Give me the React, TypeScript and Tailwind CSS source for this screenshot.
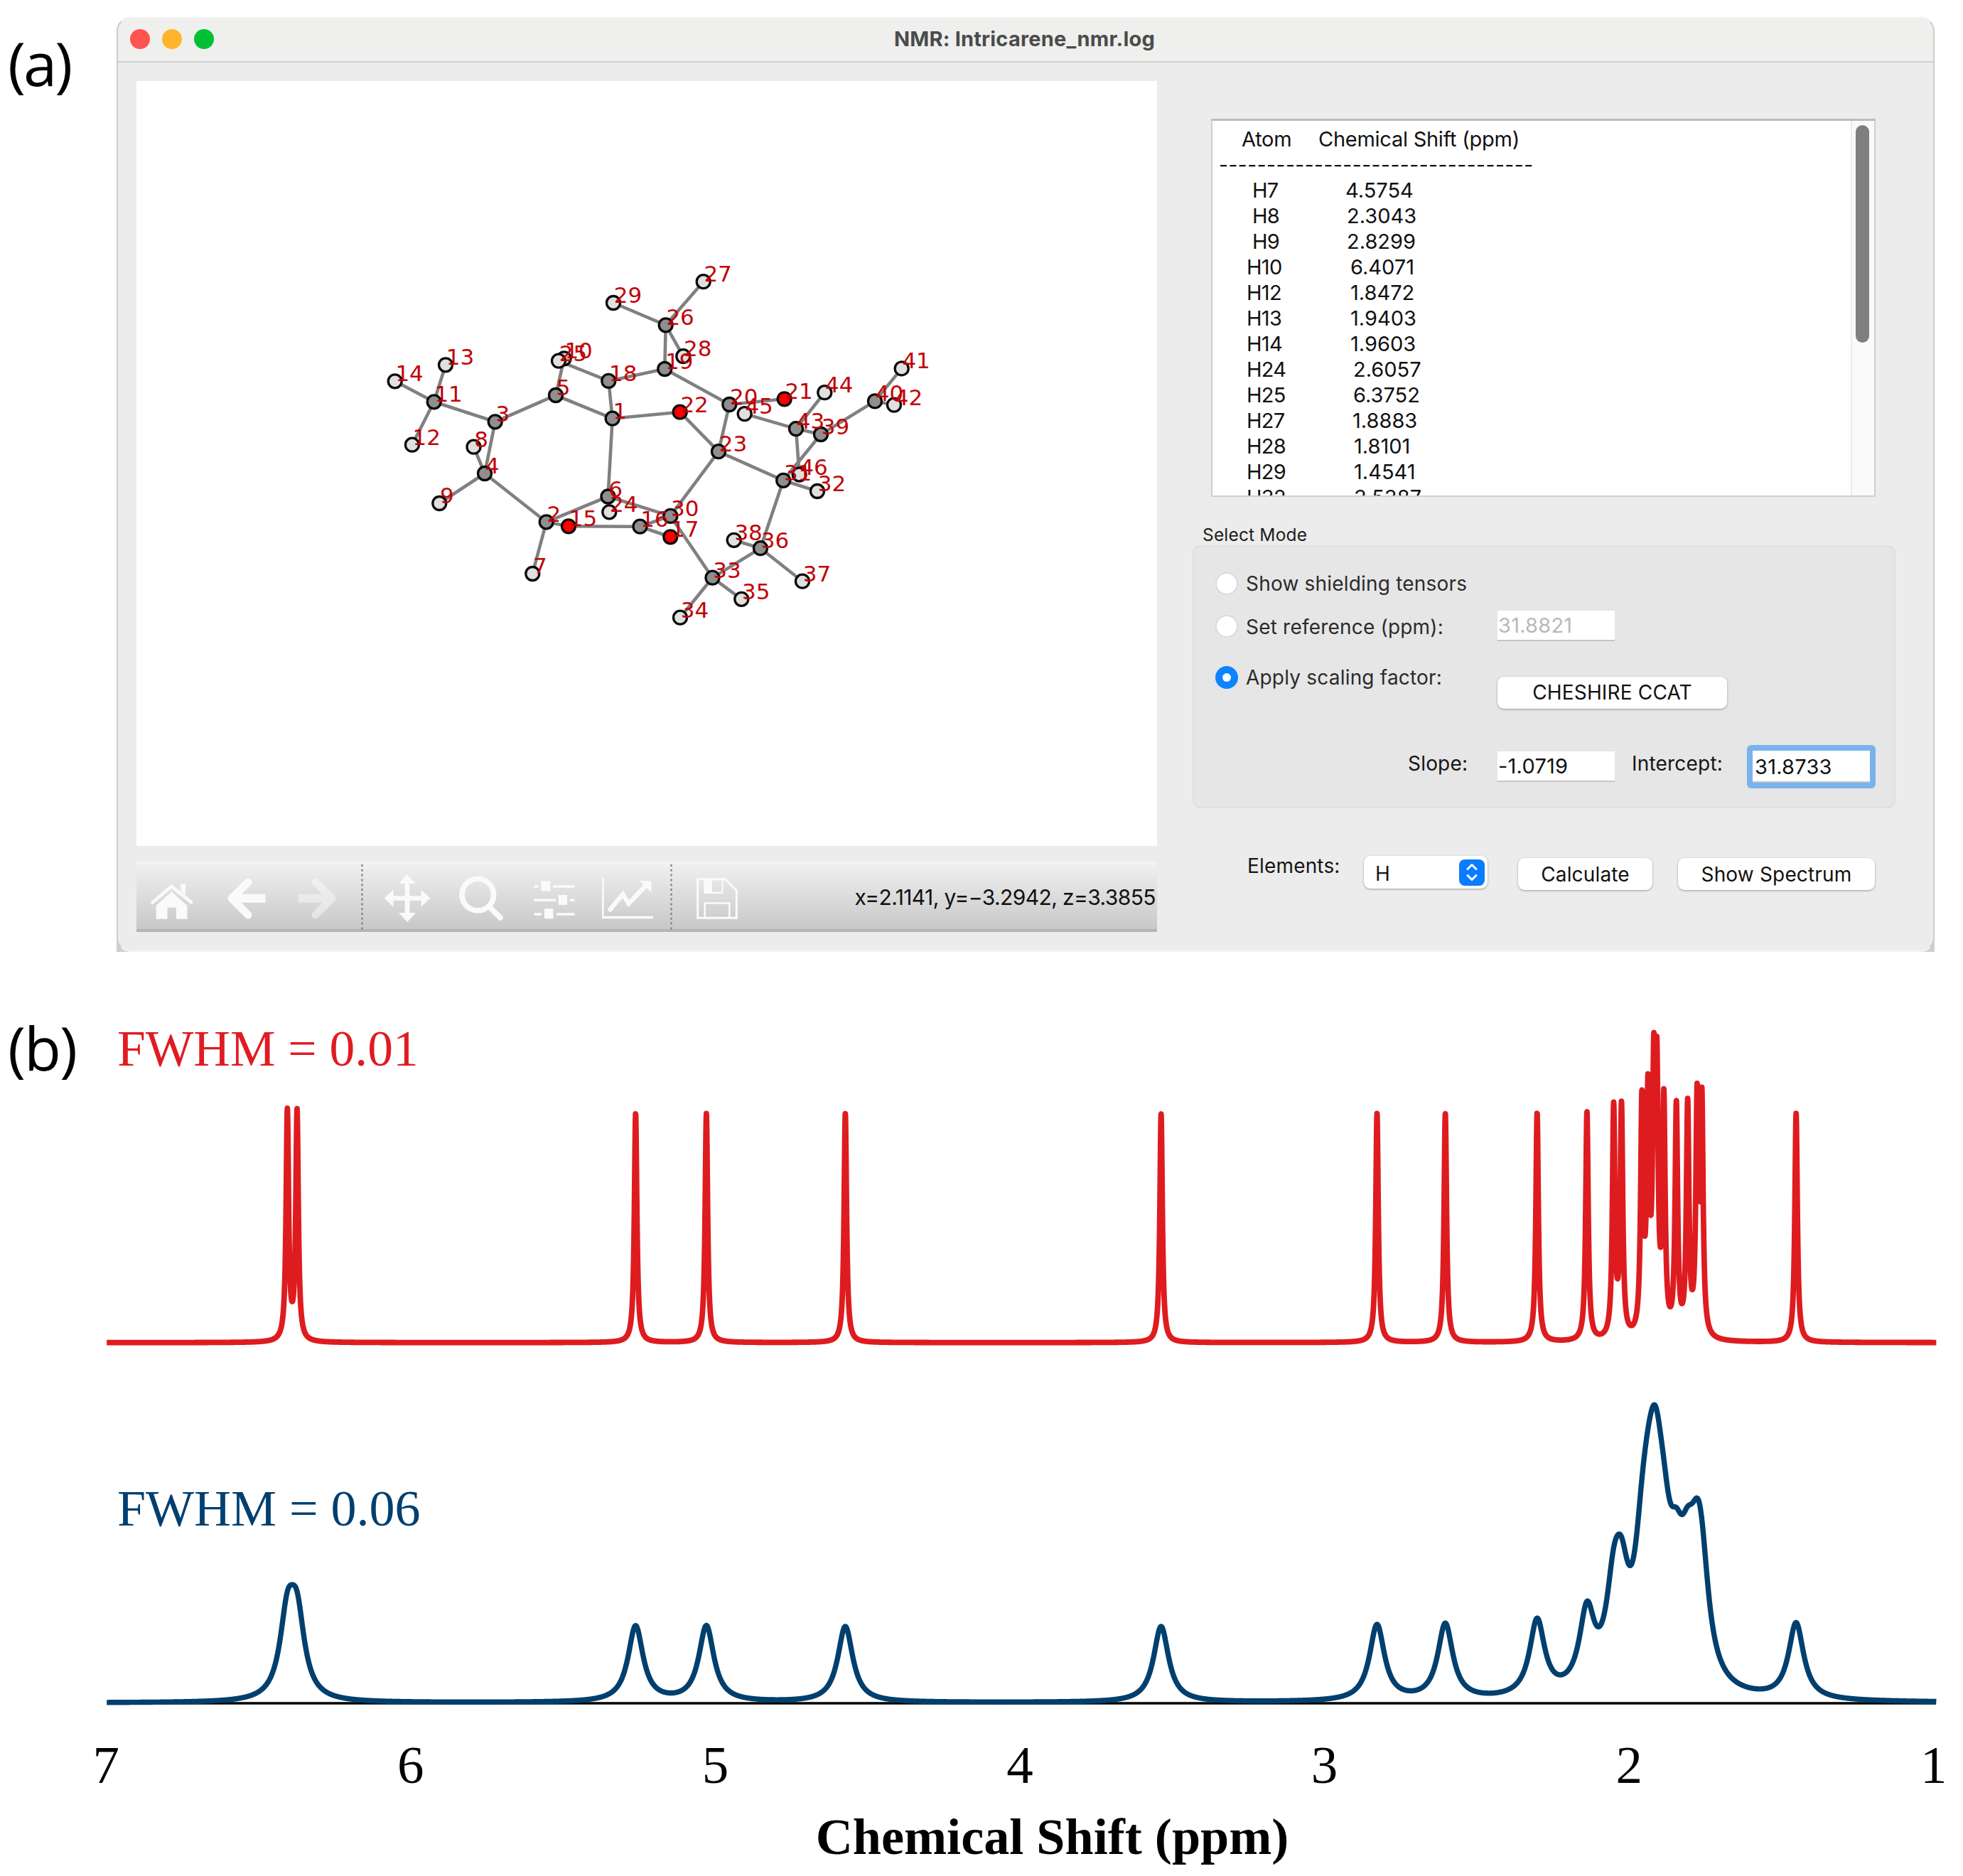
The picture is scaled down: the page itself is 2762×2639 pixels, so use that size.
import type { ReactNode } from 'react';
import clsx from 'clsx';

type Element = 'H' | 'C' | 'O';

interface Atom {
  id: number;
  el: Element;
  x: number;
  y: number;
}

const ATOMS: Atom[] = [
  { id: 14, el: 'H', x: 555.7, y: 536.3 },
  { id: 13, el: 'H', x: 627, y: 513.3 },
  { id: 11, el: 'C', x: 610.7, y: 565.3 },
  { id: 12, el: 'H', x: 579.9, y: 625.7 },
  { id: 3, el: 'C', x: 696.7, y: 593.3 },
  { id: 8, el: 'H', x: 666.5, y: 628.7 },
  { id: 4, el: 'C', x: 682, y: 666 },
  { id: 9, el: 'H', x: 618.3, y: 708 },
  { id: 5, el: 'C', x: 782, y: 556 },
  { id: 10, el: 'H', x: 793.7, y: 504.3 },
  { id: 25, el: 'H', x: 786, y: 507.7 },
  { id: 18, el: 'C', x: 856.3, y: 535.9 },
  { id: 29, el: 'H', x: 863, y: 426 },
  { id: 26, el: 'C', x: 936.7, y: 457.3 },
  { id: 27, el: 'H', x: 989.7, y: 396.2 },
  { id: 28, el: 'H', x: 961.3, y: 501.2 },
  { id: 1, el: 'C', x: 861.7, y: 588.7 },
  { id: 19, el: 'C', x: 935.3, y: 519 },
  { id: 24, el: 'H', x: 857.3, y: 720.3 },
  { id: 6, el: 'C', x: 855.5, y: 698.5 },
  { id: 2, el: 'C', x: 768.7, y: 734.3 },
  { id: 15, el: 'O', x: 800, y: 740.3 },
  { id: 16, el: 'C', x: 900.5, y: 740.7 },
  { id: 30, el: 'C', x: 943.4, y: 725.9 },
  { id: 17, el: 'O', x: 943.3, y: 755.3 },
  { id: 7, el: 'H', x: 749.3, y: 807 },
  { id: 20, el: 'C', x: 1026.3, y: 569 },
  { id: 21, el: 'O', x: 1103.7, y: 561.3 },
  { id: 22, el: 'O', x: 956.7, y: 579.7 },
  { id: 23, el: 'C', x: 1011, y: 635.2 },
  { id: 45, el: 'H', x: 1047.7, y: 582.1 },
  { id: 44, el: 'H', x: 1160.3, y: 552.2 },
  { id: 43, el: 'C', x: 1120, y: 603.1 },
  { id: 39, el: 'C', x: 1155, y: 611 },
  { id: 42, el: 'H', x: 1258, y: 569.6 },
  { id: 40, el: 'C', x: 1231, y: 564.4 },
  { id: 41, el: 'H', x: 1268.7, y: 518.4 },
  { id: 46, el: 'H', x: 1124.7, y: 667.5 },
  { id: 31, el: 'C', x: 1102.2, y: 675.8 },
  { id: 32, el: 'H', x: 1150, y: 691 },
  { id: 38, el: 'H', x: 1032.7, y: 759.8 },
  { id: 36, el: 'C', x: 1070, y: 771.2 },
  { id: 37, el: 'H', x: 1129, y: 817.7 },
  { id: 33, el: 'C', x: 1002.5, y: 812.7 },
  { id: 35, el: 'H', x: 1043.3, y: 842.8 },
  { id: 34, el: 'H', x: 957, y: 868.7 },
];

const BONDS: [number, number][] = [
  [14, 11], [13, 11], [12, 11], [11, 3], [3, 5], [3, 4], [4, 8], [4, 9], [4, 2],
  [5, 1], [5, 10], [25, 18], [18, 1], [18, 19], [19, 26], [26, 29], [26, 27],
  [26, 28], [19, 20], [20, 21], [20, 23], [22, 1], [22, 23], [1, 6], [6, 2],
  [6, 24], [6, 30], [2, 15], [15, 16], [16, 17], [16, 30], [2, 7], [30, 23],
  [30, 33], [33, 34], [33, 35], [33, 36], [36, 37], [36, 38], [36, 31], [31, 32],
  [31, 23], [31, 39], [39, 43], [39, 40], [43, 44], [43, 45], [43, 46], [40, 41],
  [40, 42],
];

const FILL: Record<Element, string> = { H: '#e0e0e0', C: '#8f8f8f', O: '#ff0000' };

// indent = x offset of each column inside the list box
const SHIFTS = [
  { atom: 'H7', atomIndent: 57, shift: '4.5754', shiftIndent: 188 },
  { atom: 'H8', atomIndent: 57, shift: '2.3043', shiftIndent: 190 },
  { atom: 'H9', atomIndent: 57, shift: '2.8299', shiftIndent: 190 },
  { atom: 'H10', atomIndent: 49, shift: '6.4071', shiftIndent: 195 },
  { atom: 'H12', atomIndent: 49, shift: '1.8472', shiftIndent: 195 },
  { atom: 'H13', atomIndent: 49, shift: '1.9403', shiftIndent: 195 },
  { atom: 'H14', atomIndent: 49, shift: '1.9603', shiftIndent: 195 },
  { atom: 'H24', atomIndent: 49, shift: '2.6057', shiftIndent: 199 },
  { atom: 'H25', atomIndent: 49, shift: '6.3752', shiftIndent: 199 },
  { atom: 'H27', atomIndent: 49, shift: '1.8883', shiftIndent: 198 },
  { atom: 'H28', atomIndent: 49, shift: '1.8101', shiftIndent: 200 },
  { atom: 'H29', atomIndent: 49, shift: '1.4541', shiftIndent: 200 },
  { atom: 'H32', atomIndent: 49, shift: '3.5387', shiftIndent: 200 },
];

// [ppm, relative intensity]
const PEAKS: [number, number][] = [
  [6.4071, 1], [6.3752, 1], [5.2638, 1], [5.0315, 1], [4.5754, 1], [3.5387, 1],
  [2.8299, 1], [2.6057, 1], [2.3043, 1], [2.1407, 1], [2.053, 1], [2.0273, 1],
  [1.9603, 1], [1.9403, 1], [1.9213, 1.03], [1.9112, 1.03], [1.8883, 1],
  [1.8472, 1], [1.8101, 1], [1.779, 1], [1.7635, 1], [1.4541, 1],
];

const ppmToX = (ppm: number) => 150.2 + (7 - ppm) * 428.6;

function spectrumPath(fwhm: number, height: number, baseline: number) {
  const hw = fwhm / 2;
  const points: string[] = [];
  for (let ppm = 7; ppm >= 0.9937; ppm -= 0.0005) {
    const sum = PEAKS.reduce((acc, [p, w]) => acc + w / (1 + ((ppm - p) / hw) ** 2), 0);
    points.push(`${ppmToX(ppm).toFixed(2)},${(baseline - height * sum).toFixed(2)}`);
  }
  return points.join(' ');
}

function Molecule() {
  const byId = new Map(ATOMS.map((a) => [a.id, a]));
  return (
    <svg width="1436" height="1076" viewBox="192 114 1436 1076" className="block bg-white">
      {BONDS.map(([a, b]) => {
        const p = byId.get(a)!;
        const q = byId.get(b)!;
        return (
          <line key={`${a}-${b}`} x1={p.x} y1={p.y} x2={q.x} y2={q.y} stroke="#808080" strokeWidth="4.6" />
        );
      })}
      {ATOMS.map((a) => (
        <circle key={a.id} cx={a.x} cy={a.y} r="9.5" fill={FILL[a.el]} stroke="#0a0a0a" strokeWidth="3.3" />
      ))}
      {ATOMS.map((a) => (
        <text
          key={a.id}
          x={a.x + 0.7}
          y={a.y}
          fill="#c00408"
          fontSize="31"
          fontFamily="'DejaVu Sans', sans-serif"
        >
          {a.id}
        </text>
      ))}
    </svg>
  );
}

function ToolIcon({ width, className, children }: { width: number; className?: string; children: ReactNode }) {
  return (
    <svg
      width={width}
      height="99"
      viewBox={`0 0 ${width} 99`}
      fill="none"
      stroke="#fafafa"
      className={clsx('block shrink-0', className)}
    >
      {children}
    </svg>
  );
}

function Separator({ className }: { className?: string }) {
  return (
    <ToolIcon width={3} className={className}>
      <line x1="1.5" y1="4" x2="1.5" y2="96" stroke="#858585" strokeWidth="2.4" strokeDasharray="3 3.8" />
    </ToolIcon>
  );
}

function Toolbar() {
  return (
    <div className="mt-[22px] flex h-[99px] w-[1436px] border-t-[3px] border-b-4 border-t-[#f4f4f4] border-b-[#b5b5b5] bg-linear-to-b from-[#f0f0f0] to-[#c8c8c8]">
      <div className="-mt-[3px] flex">
        {/* Home */}
        <ToolIcon width={60} className="ml-5">
          <path d="M2.5 57.5 L29.4 34.8 L57 57" strokeWidth="4.6" strokeLinecap="round" />
          <path d="M42.3 31.3 H49 V47 L42.3 41 Z" fill="#fafafa" stroke="none" />
          <path d="M29.4 42.5 L51.5 62 V80.7 H36 V64.7 H23.5 V80.7 H7.7 V62 Z" fill="#fafafa" stroke="none" />
        </ToolIcon>
        {/* Back */}
        <ToolIcon width={56} className="ml-[46px]">
          <path d="M31 29 L8 51.7 L31 75" strokeWidth="11" strokeLinecap="round" strokeLinejoin="round" />
          <path d="M10 51.7 H55.5" strokeWidth="12" />
        </ToolIcon>
        {/* Forward */}
        <ToolIcon width={56} className="ml-[45px] opacity-50">
          <path d="M25 29 L48 51.7 L25 75" strokeWidth="11" strokeLinecap="round" strokeLinejoin="round" />
          <path d="M1 51.7 H46" strokeWidth="12" />
        </ToolIcon>
        <Separator className="ml-[33px]" />
        {/* Pan */}
        <ToolIcon width={66} className="ml-[29px]">
          <path d="M33 26 V77 M8 51.5 H58" strokeWidth="6.6" />
          <path
            d="M33 18 L45 31 H21 Z M33 85 L45 72 H21 Z M0.5 51.5 L13.5 39.5 V63.5 Z M65.5 51.5 L52.5 39.5 V63.5 Z"
            fill="#fafafa"
            stroke="none"
          />
        </ToolIcon>
        {/* Zoom */}
        <ToolIcon width={62} className="ml-10">
          <circle cx="26.3" cy="46.6" r="22.3" strokeWidth="7.6" />
          <path d="M43 64 L58 79" strokeWidth="7.5" strokeLinecap="round" />
        </ToolIcon>
        {/* Subplots */}
        <ToolIcon width={58} className="ml-[43px]">
          <path
            d="M0.5 35 H6 M27 35 H57.5 M0.5 54.3 H31 M50.7 54.3 H57.5 M0.5 74 H11 M32 74 H57.5"
            strokeWidth="3.6"
          />
          <path d="M10.5 27.5 h13 v14 h-13 Z M34.7 47 h12.3 v14 h-12.3 Z M15 66.3 h12.5 v14 h-12.5 Z" fill="#fafafa" stroke="none" />
        </ToolIcon>
        {/* Axes */}
        <ToolIcon width={72} className="ml-[38px]">
          <path d="M1.4 23 V80" strokeWidth="2.6" />
          <path d="M0 78.5 H72" strokeWidth="3.4" />
          <path d="M11.5 67.3 L29.4 46 L37.5 59 L61 34.5" strokeWidth="6.5" strokeLinecap="round" />
          <path d="M53 27.3 H69.5 V43.5 Z" fill="#fafafa" stroke="none" />
        </ToolIcon>
        <Separator className="ml-6" />
        {/* Save */}
        <ToolIcon width={58} className="ml-[34px]">
          <path d="M1.7 24.7 H40.5 L56.3 40.5 V79.3 H1.7 Z" strokeWidth="3" />
          <path d="M11.5 24.7 V43.8 H36.5 V24.7" strokeWidth="2.4" />
          <path d="M11 25 h11 v18 h-11 Z" fill="#fafafa" stroke="none" />
          <path d="M11.7 79 V58.5 H46.3 V79" strokeWidth="2.6" />
        </ToolIcon>
      </div>
      <span className="mr-0.5 ml-auto text-[30px] leading-[94px] tracking-[-0.02em] whitespace-pre text-[#111]">
        x=2.1141, y=−3.2942, z=3.3855
      </span>
    </div>
  );
}

function ShiftList() {
  return (
    <div className="mt-[79px] ml-[75px] flex h-[532px] w-[935px] overflow-hidden border-2 border-t-[3px] border-[#cfcfcf] border-t-[#bcbcbc] bg-white text-[29px] leading-9 text-[#111]">
      <div className="flex-1 pt-2">
        <div className="flex h-9 tracking-[-0.009em]">
          <span className="ml-[41px] w-[108px]">Atom</span>
          <span className="whitespace-pre">Chemical Shift (ppm)</span>
        </div>
        <div className="ml-[9px] h-9 text-[28px] tracking-[0.019em] whitespace-pre">---------------------------------</div>
        {SHIFTS.map((row) => (
          <div key={row.atom} className="flex h-9">
            <span className="tracking-[-0.025em]" style={{ marginLeft: row.atomIndent - 1, width: row.shiftIndent - row.atomIndent }}>
              {row.atom}
            </span>
            <span>{row.shift}</span>
          </div>
        ))}
      </div>
      <div className="w-[33px] border-l-2 border-[#ebebeb] bg-[#fafafa] pt-[6px] pl-[5px]">
        <div className="h-[306px] w-[19px] rounded-full bg-[#7f7f7f]" />
      </div>
    </div>
  );
}

function Radio({ checked = false }: { checked?: boolean }) {
  return (
    <span
      className={clsx(
        'flex size-8 shrink-0 items-center justify-center rounded-full',
        checked ? 'bg-[#0a84ff]' : 'border-2 border-[#dadada] bg-white',
      )}
    >
      {checked && <span className="size-3 rounded-full bg-white" />}
    </span>
  );
}

function Entry({ value, disabled = false }: { value: string; disabled?: boolean }) {
  return (
    <div
      className={clsx(
        'flex h-[43px] w-[165px] items-center border-b-2 border-[#c6c6c6] bg-white pl-px text-[29px] tracking-[0.008em]',
        disabled ? 'text-[#b9b9b9]' : 'text-[#111]',
      )}
    >
      {value}
    </div>
  );
}

function PushButton({ className, children }: { className?: string; children: ReactNode }) {
  return (
    <button
      className={clsx(
        'flex h-[45px] items-center justify-center rounded-[9px] bg-white leading-none tracking-[0.006em] whitespace-pre text-[#111] shadow-[0_1px_3px_rgba(0,0,0,0.35)]',
        className,
      )}
    >
      {children}
    </button>
  );
}

function ModeGroup() {
  return (
    <div className="ml-[49px] h-[370px] w-[989px] rounded-[11px] border-2 border-[#dfdfdf] bg-[#e6e6e6] pl-[30px] text-[28px] leading-none tracking-[0.007em] text-[#2b2b2b]">
      <div className="mt-[22px] flex h-[60px] items-center gap-[11px]">
        <Radio />
        <span>Show shielding tensors</span>
      </div>
      <div className="flex h-[59px] items-center">
        <Radio />
        <span className="mt-0.5 ml-[11px] w-[354px]">Set reference (ppm):</span>
        <Entry value="31.8821" disabled />
      </div>
      <div className="flex h-[90px]">
        <div className="flex h-[86px] items-center gap-[11px]">
          <Radio checked />
          <span className="w-[354px]">Apply scaling factor:</span>
        </div>
        <PushButton className="mt-[42px] w-[323px] pb-px">CHESHIRE CCAT</PushButton>
      </div>
      <div className="mt-[48px] flex h-[61px] items-center text-[#151515]">
        <span className="mb-2.5 ml-[271px] w-[126px]">Slope:</span>
        <Entry value="-1.0719" />
        <span className="mb-2.5 ml-6 w-[162px]">Intercept:</span>
        <div className="rounded-[6px] border-8 border-[#7ab2ee]">
          <div className="flex h-[45px] w-[165px] items-center border-b-2 border-[#c6c6c6] bg-white pt-0.5 pl-[3px] text-[29px] tracking-[0.008em] text-[#111]">
            31.8733
          </div>
        </div>
      </div>
    </div>
  );
}

function Actions() {
  return (
    <div className="mt-[67px] ml-[126px] flex items-start text-[28px] tracking-[0.006em] text-[#151515]">
      <span className="w-[164px] leading-[28px]">Elements:</span>
      <div className="flex h-[46px] w-[174px] items-center justify-between rounded-[9px] bg-white pr-1 pl-4 leading-none shadow-[0_1px_3px_rgba(0,0,0,0.35)]">
        <span className="mt-1">H</span>
        <span className="flex h-[37px] w-9 items-center justify-center rounded-[8px] bg-[#0a7cff]">
          <svg width="18" height="26" viewBox="0 0 18 26" fill="none" stroke="#fff" strokeWidth="3" strokeLinecap="round" strokeLinejoin="round">
            <path d="M3 8.5 L9 2.5 L15 8.5 M3 17.5 L9 23.5 L15 17.5" />
          </svg>
        </span>
      </div>
      <PushButton className="mt-[3px] ml-[43px] w-[189px]">Calculate</PushButton>
      <PushButton className="mt-[3px] ml-[36px] w-[277px]">Show Spectrum</PushButton>
    </div>
  );
}

function NmrWindow() {
  return (
    <div className="h-[1315px] w-[2558px] rounded-t-[20px] bg-[#cfcfcf]">
      <div className="flex h-[1315px] flex-col overflow-hidden rounded-[20px] border-2 border-[#cdcdcd] border-t-[#f2f2f2] border-b-[#f4f4f4] bg-[#ececec] font-[Inter,'Liberation_Sans',sans-serif]">
        <div className="flex h-[62px] items-center border-b-2 border-[#cfcfcf] bg-[#efefed] pb-[3px]">
          <div className="ml-[17px] flex w-[198px] gap-[17px]">
            <span className="size-7 rounded-full bg-[#ff5350]" />
            <span className="size-7 rounded-full bg-[#ffb52b]" />
            <span className="size-7 rounded-full bg-[#00c136]" />
          </div>
          <div className="mr-[218px] flex-1 text-center text-[29px] leading-none font-bold tracking-[0.007em] text-[#4b4b4b]">
            NMR: Intricarene_nmr.log
          </div>
        </div>
        <div className="flex flex-1">
          <div className="w-[1463px] pt-[26px] pl-[26px]">
            <Molecule />
            <Toolbar />
          </div>
          <div className="flex flex-col">
            <ShiftList />
            <div className="mt-[39px] ml-[63px] h-[29px] text-[24.5px] leading-[29px] tracking-[0.007em] text-[#1c1c1c]">
              Select Mode
            </div>
            <ModeGroup />
            <Actions />
          </div>
        </div>
      </div>
    </div>
  );
}

function Spectra() {
  return (
    <svg width="2762" height="1300" viewBox="0 1339 2762 1300" className="block">
      <text x="11" y="1506" fontSize="85" letterSpacing="-2" fontFamily="'Open Sans', sans-serif">
        (b)
      </text>
      <g fontFamily="'Liberation Serif', serif">
        <text x="165" y="1499" fontSize="71.5" fill="#e01b22">
          FWHM = 0.01
        </text>
        <text x="165" y="2146" fontSize="72" fill="#003f6f">
          FWHM = 0.06
        </text>
        {[7, 6, 5, 4, 3, 2, 1].map((ppm) => (
          <text key={ppm} x={ppmToX(ppm) - 1} y="2508" fontSize="75" textAnchor="middle">
            {ppm}
          </text>
        ))}
        <text x="1480.5" y="2608" fontSize="72.2" fontWeight="bold" textAnchor="middle">
          Chemical Shift (ppm)
        </text>
      </g>
      <line x1="151" y1="2396" x2="2724" y2="2396" stroke="#000" strokeWidth="3.6" />
      <g fill="none" strokeLinejoin="round">
        <polyline points={spectrumPath(0.01, 322, 1888.7)} stroke="#de1c1f" strokeWidth="7.8" />
        <polyline points={spectrumPath(0.06, 106.5, 2395.5)} stroke="#003f6e" strokeWidth="7.4" />
      </g>
    </svg>
  );
}

export default function App() {
  return (
    <div className="h-[2639px] w-[2762px] overflow-hidden bg-white">
      <div className="flex h-[1339px] pt-6">
        <div className="w-[164px] shrink-0 pt-[6px] pl-[11px] font-['Open_Sans',sans-serif] text-[85px] leading-[116px] tracking-[-3px] text-black">
          (a)
        </div>
        <NmrWindow />
      </div>
      <Spectra />
    </div>
  );
}
